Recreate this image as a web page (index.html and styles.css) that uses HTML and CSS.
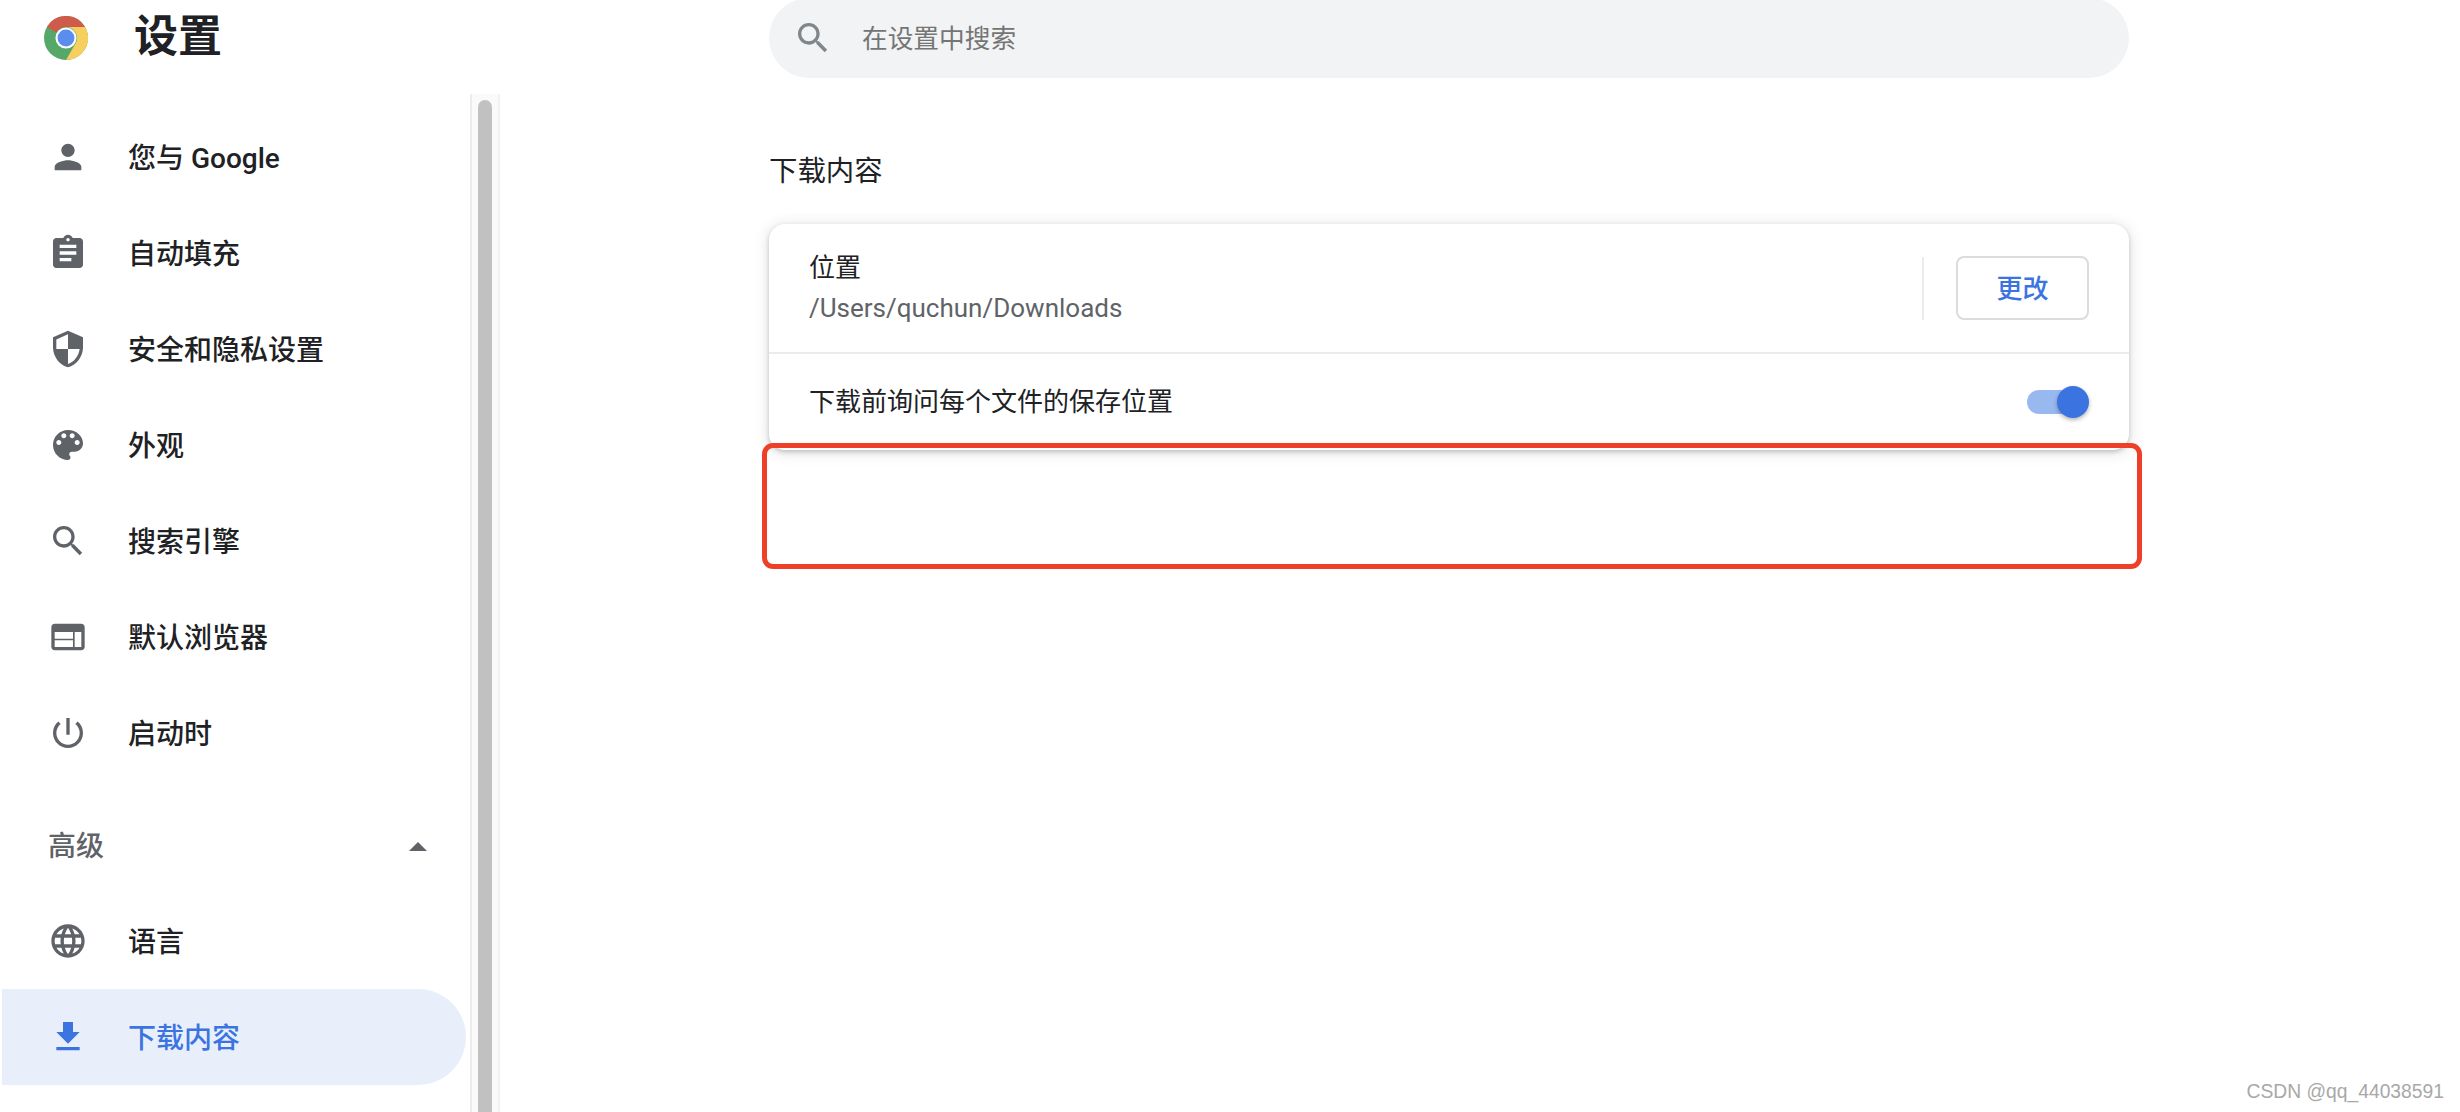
FILE: index.html
```html
<!DOCTYPE html>
<html lang="zh-CN">
<head>
    <meta charset="UTF-8">
    <title>设置</title>
    <link rel="stylesheet" href="styles.css">
</head>
<body>
    <div class="page">
        <aside class="side">
            <div class="side-header">
                <svg class="logo" viewBox="0 0 48 48">
                    <circle cx="24" cy="24" r="24" fill="#55a868"/>
                    <path d="M3.2 12A24 24 0 0 1 44.8 12H24A12 12 0 0 0 13.6 18Z" fill="#cf5b4b"/>
                    <path d="M44.8 12A24 24 0 0 1 24 48L34.4 30A12 12 0 0 0 24 12Z" fill="#f6cf5e"/>
                    <circle cx="24" cy="24" r="11.5" fill="#fff"/>
                    <circle cx="24" cy="24" r="9.2" fill="#5b8def"/>
                </svg>
                <h1>设置</h1>
            </div>
            <div class="side-body">
                <nav class="nav">
                    <a class="nav-item">
                        <svg class="icon" viewBox="0 0 24 24"><path d="M12 12c2.21 0 4-1.79 4-4s-1.79-4-4-4-4 1.79-4 4 1.79 4 4 4zm0 2c-2.67 0-8 1.34-8 4v2h16v-2c0-2.66-5.33-4-8-4z"/></svg>
                        <span>您与 Google</span>
                    </a>
                    <a class="nav-item">
                        <svg class="icon" viewBox="0 0 24 24"><path d="M19 3h-4.18C14.4 1.84 13.3 1 12 1c-1.3 0-2.4.84-2.82 2H5c-1.1 0-2 .9-2 2v14c0 1.1.9 2 2 2h14c1.1 0 2-.9 2-2V5c0-1.1-.9-2-2-2zm-7 0c.55 0 1 .45 1 1s-.45 1-1 1-1-.45-1-1 .45-1 1-1zm2 14H7v-2h7v2zm3-4H7v-2h10v2zm0-4H7V7h10v2z"/></svg>
                        <span>自动填充</span>
                    </a>
                    <a class="nav-item">
                        <svg class="icon" viewBox="0 0 24 24"><path d="M12 1L3 5v6c0 5.55 3.84 10.74 9 12 5.16-1.26 9-6.45 9-12V5l-9-4zm0 10.99h7c-.53 4.12-3.28 7.79-7 8.94V12H5V6.3l7-3.11v8.8z"/></svg>
                        <span>安全和隐私设置</span>
                    </a>
                    <a class="nav-item">
                        <svg class="icon" viewBox="0 0 24 24"><path d="M12 3c-4.97 0-9 4.03-9 9s4.03 9 9 9c.83 0 1.5-.67 1.5-1.5 0-.39-.15-.74-.39-1.01-.23-.26-.38-.61-.38-.99 0-.83.67-1.5 1.5-1.5H16c2.76 0 5-2.24 5-5 0-4.42-4.03-8-9-8zm-5.5 9c-.83 0-1.5-.67-1.5-1.5S5.67 9 6.5 9 8 9.67 8 10.5 7.33 12 6.5 12zm3-4C8.67 8 8 7.33 8 6.5S8.67 5 9.5 5s1.5.67 1.5 1.5S10.33 8 9.5 8zm5 0c-.83 0-1.5-.67-1.5-1.5S13.67 5 14.5 5s1.5.67 1.5 1.5S15.33 8 14.5 8zm3 4c-.83 0-1.5-.67-1.5-1.5S16.67 9 17.5 9s1.5.67 1.5 1.5-.67 1.5-1.5 1.5z"/></svg>
                        <span>外观</span>
                    </a>
                    <a class="nav-item">
                        <svg class="icon" viewBox="0 0 24 24"><path d="M15.5 14h-.79l-.28-.27C15.41 12.59 16 11.11 16 9.5 16 5.91 13.09 3 9.5 3S3 5.91 3 9.5 5.91 16 9.5 16c1.61 0 3.09-.59 4.23-1.57l.27.28v.79l5 4.99L20.49 19l-4.99-5zm-6 0C7.01 14 5 11.99 5 9.5S7.01 5 9.5 5 14 7.01 14 9.5 11.99 14 9.5 14z"/></svg>
                        <span>搜索引擎</span>
                    </a>
                    <a class="nav-item">
                        <svg class="icon" viewBox="0 0 24 24"><path d="M20 4H4c-1.1 0-1.99.9-1.99 2L2 18c0 1.1.9 2 2 2h16c1.1 0 2-.9 2-2V6c0-1.1-.9-2-2-2zm-5 14H4v-4h11v4zm0-5H4V9h11v4zm5 5h-4V9h4v9z"/></svg>
                        <span>默认浏览器</span>
                    </a>
                    <a class="nav-item">
                        <svg class="icon" viewBox="0 0 24 24"><path d="M13 3h-2v10h2V3zm4.83 2.17l-1.42 1.42C17.99 7.86 19 9.81 19 12c0 3.87-3.13 7-7 7s-7-3.13-7-7c0-2.19 1.01-4.14 2.58-5.42L6.17 5.17C4.23 6.82 3 9.26 3 12c0 4.97 4.03 9 9 9s9-4.03 9-9c0-2.74-1.23-5.18-3.17-6.83z"/></svg>
                        <span>启动时</span>
                    </a>
                    <div class="nav-advanced">
                        <span>高级</span>
                        <span class="arrow-up"></span>
                    </div>
                    <a class="nav-item">
                        <svg class="icon" viewBox="0 0 24 24"><path d="M11.99 2C6.47 2 2 6.48 2 12s4.47 10 9.99 10C17.52 22 22 17.52 22 12S17.52 2 11.99 2zm6.93 6h-2.95c-.32-1.25-.78-2.45-1.38-3.56 1.84.63 3.37 1.91 4.33 3.56zM12 4.04c.83 1.2 1.48 2.53 1.91 3.96h-3.82c.43-1.43 1.08-2.76 1.91-3.96zM4.26 14C4.1 13.36 4 12.69 4 12s.1-1.36.26-2h3.38c-.08.66-.14 1.32-.14 2 0 .68.06 1.34.14 2H4.26zm.82 2h2.95c.32 1.25.78 2.45 1.38 3.56-1.84-.63-3.37-1.9-4.33-3.56zm2.95-8H5.08c.96-1.66 2.49-2.93 4.33-3.56C8.81 5.55 8.35 6.75 8.03 8zM12 19.96c-.83-1.2-1.48-2.53-1.91-3.96h3.82c-.43 1.43-1.08 2.76-1.91 3.96zM14.34 14H9.66c-.09-.66-.16-1.32-.16-2 0-.68.07-1.35.16-2h4.68c.09.65.16 1.32.16 2 0 .68-.07 1.34-.16 2zm.25 5.56c.6-1.11 1.06-2.31 1.38-3.56h2.95c-.96 1.65-2.49 2.93-4.33 3.56zM16.36 14c.08-.66.14-1.32.14-2 0-.68-.06-1.34-.14-2h3.38c.16.64.26 1.31.26 2s-.1 1.36-.26 2h-3.38z"/></svg>
                        <span>语言</span>
                    </a>
                    <a class="nav-item active">
                        <svg class="icon" viewBox="0 0 24 24"><path d="M19 9h-4V3H9v6H5l7 7 7-7zM5 18v2h14v-2H5z"/></svg>
                        <span>下载内容</span>
                    </a>
                </nav>
                <div class="scrollbar">
                    <div class="scrollbar-thumb"></div>
                </div>
            </div>
        </aside>

        <main class="main">
            <div class="search">
                <svg class="icon search-icon" viewBox="0 0 24 24"><path d="M15.5 14h-.79l-.28-.27C15.41 12.59 16 11.11 16 9.5 16 5.91 13.09 3 9.5 3S3 5.91 3 9.5 5.91 16 9.5 16c1.61 0 3.09-.59 4.23-1.57l.27.28v.79l5 4.99L20.49 19l-4.99-5zm-6 0C7.01 14 5 11.99 5 9.5S7.01 5 9.5 5 14 7.01 14 9.5 11.99 14 9.5 14z"/></svg>
                <span class="search-text">在设置中搜索</span>
            </div>

            <h2 class="section-title">下载内容</h2>

            <section class="card">
                <div class="row row-location">
                    <div class="row-text">
                        <div>位置</div>
                        <div class="secondary">/Users/quchun/Downloads</div>
                    </div>
                    <div class="separator"></div>
                    <button class="btn">更改</button>
                </div>
                <div class="row row-ask">
                    <div class="row-text">下载前询问每个文件的保存位置</div>
                    <div class="toggle">
                        <div class="toggle-track"></div>
                        <div class="toggle-knob"></div>
                    </div>
                </div>
            </section>
        </main>
    </div>

    <div class="red-box"></div>
    <div class="watermark">CSDN @qq_44038591</div>
</body>
</html>
```

FILE: styles.css
```css
:root {
    --text-color: #202124;
    --gray-color: #5f6368;
    --blue-color: #3b74e0;
}

* {
    box-sizing: border-box;
}

body {
    margin: 0;
    height: 100vh;
    overflow: hidden;
    background: #fff;
    color: var(--text-color);
    font-family: Roboto, "Noto Sans CJK SC", sans-serif;
}

.page {
    display: flex;
    height: 100%;
}

/* Sidebar */
.side {
    width: 500px;
    display: flex;
    flex-direction: column;
    flex-shrink: 0;
}

.side-header {
    height: 94px;
    padding: 0 0 18px 44px;
    display: flex;
    align-items: center;
    gap: 46px;
}

.logo {
    width: 44px;
    height: 44px;
}

h1 {
    margin: 0;
    padding-bottom: 2px;
    font-size: 44px;
    font-weight: 700;
    line-height: 50px;
}

.side-body {
    flex: 1;
    display: flex;
    min-height: 0;
}

.nav {
    width: 470px;
    padding-top: 15px;
}

.nav-item {
    height: 96px;
    padding-left: 48px;
    display: flex;
    align-items: center;
    gap: 40px;
    font-size: 28px;
    font-weight: 500;
}

.nav-item span {
    padding-bottom: 3px;
}

.icon {
    width: 40px;
    height: 40px;
    flex-shrink: 0;
    fill: var(--gray-color);
}

.nav-item.active {
    width: 464px;
    margin-left: 2px;
    padding-left: 46px;
    border-radius: 0 48px 48px 0;
    background: #e8effb;
    color: var(--blue-color);
}

.nav-item.active .icon {
    fill: var(--blue-color);
}

.nav-advanced {
    height: 112px;
    padding: 14px 43px 0 48px;
    display: flex;
    align-items: center;
    justify-content: space-between;
    font-size: 28px;
    font-weight: 500;
    color: var(--gray-color);
}

.arrow-up {
    width: 0;
    height: 0;
    margin-top: 4px;
    border-left: 9px solid transparent;
    border-right: 9px solid transparent;
    border-bottom: 9px solid var(--gray-color);
}

.scrollbar {
    width: 30px;
    padding: 6px 6px 0;
    background: #fafafa;
    border-left: 2px solid #ececec;
    border-right: 2px solid #f2f2f2;
}

.scrollbar-thumb {
    height: 100%;
    border-radius: 8px 8px 0 0;
    background: #c1c1c1;
}

/* Main column */
.main {
    width: 1360px;
    margin-left: 269px;
}

.search {
    height: 80px;
    margin-top: -2px;
    padding-left: 24px;
    display: flex;
    align-items: center;
    gap: 29px;
    border-radius: 40px;
    background: #f1f3f4;
    font-size: 25.7px;
    color: #757575;
}

.search-text {
    padding-bottom: 3px;
}

.search-icon {
    fill: #80868b;
}

.section-title {
    margin: 42px 0 0;
    height: 104px;
    font-size: 28.4px;
    font-weight: 400;
    line-height: 104px;
}

.card {
    border-radius: 16px;
    background: #fff;
    box-shadow: 0 2px 4px rgba(60, 64, 67, 0.25), 0 2px 14px 2px rgba(60, 64, 67, 0.13);
    font-size: 26px;
}

.row {
    padding: 0 40px;
    display: flex;
    align-items: center;
}

.row-location {
    height: 130px;
    gap: 32px;
    border-bottom: 2px solid #ececec;
}

.row-ask {
    height: 96px;
}

.row-text {
    flex: 1;
    line-height: 40px;
}

.secondary {
    color: var(--gray-color);
}

.separator {
    width: 2px;
    height: 63px;
    background: #ececec;
}

.btn {
    width: 133px;
    height: 64px;
    margin-bottom: 1px;
    padding: 0 0 3px;
    border: 2px solid #dadce0;
    border-radius: 8px;
    background: #fff;
    color: var(--blue-color);
    font-family: inherit;
    font-size: 26px;
    font-weight: 500;
}

.toggle {
    position: relative;
    width: 62px;
    height: 32px;
    display: flex;
    align-items: center;
}

.toggle-track {
    width: 56px;
    height: 24px;
    border-radius: 12px;
    background: #9ab8f0;
}

.toggle-knob {
    position: absolute;
    top: 0;
    right: 0;
    width: 32px;
    height: 32px;
    border-radius: 50%;
    background: var(--blue-color);
    box-shadow: 0 2px 4px rgba(0, 0, 0, 0.3);
}

/* Annotation drawn on top of the screenshot */
.red-box {
    position: absolute;
    left: 762px;
    top: 443px;
    width: 1380px;
    height: 126px;
    border: 5px solid #ee4028;
    border-radius: 11px;
}

.watermark {
    position: absolute;
    right: 16px;
    bottom: 9px;
    font-family: "Liberation Sans", sans-serif;
    font-size: 19.3px;
    color: #a8a8a8;
}
```
